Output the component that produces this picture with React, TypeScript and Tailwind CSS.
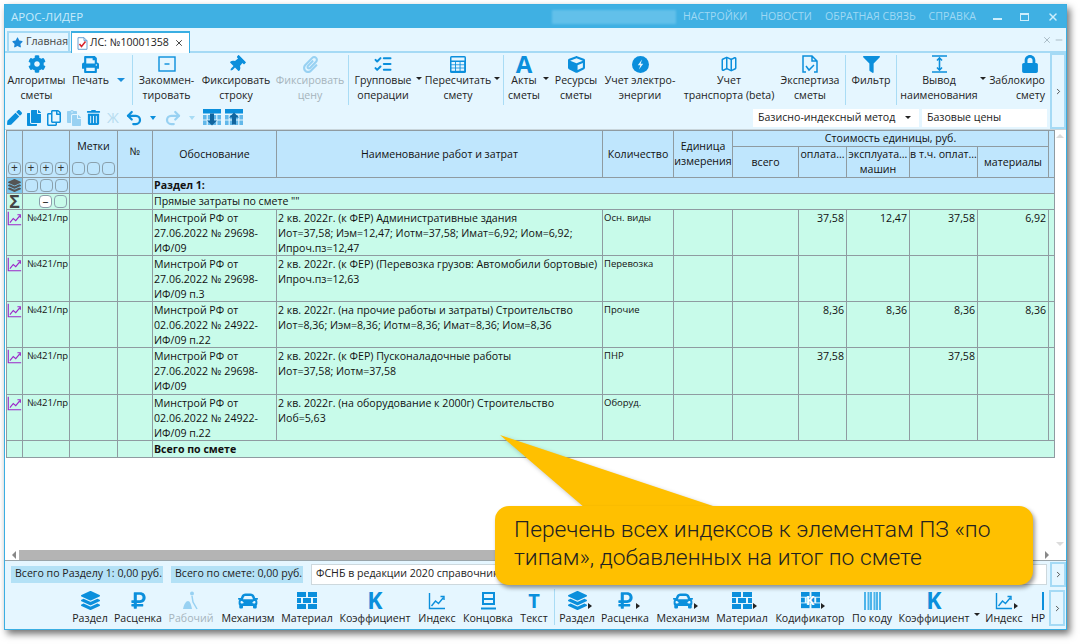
import type { ReactNode } from "react";
import {
  FaCog, FaPrint, FaThumbtack, FaPaperclip, FaFilter, FaLock, FaLayerGroup, FaRubleSign, FaCar,
  FaCube, FaTrashAlt, FaPen, FaCopy, FaRegCopy, FaPaste, FaStar,
} from "react-icons/fa";
import { Undo2, Redo2, X, Minus, ChevronRight, Map, ListChecks } from "lucide-react";

const blue = "#0b8fdc";

const Caret = ({ w = 4, big = false }: { w?: number; big?: boolean }) => (
  <span className="flex justify-center pt-[24px] shrink-0" style={{ width: w }}>
    {big
      ? <span className="shrink-0 mt-[1px] w-0 h-0 border-x-[4px] border-x-transparent border-t-[4px] border-t-[#1a8fdc]" />
      : <span className="shrink-0 w-0 h-0 border-x-[3px] border-x-transparent border-t-[3px] border-t-[#222]" />}
  </span>
);

const Sep = () => <span className="w-px h-[50px] bg-[#a9dcf5] shrink-0 mt-[2px]" />;

function Tool({ w, icon, a, b, dim, right }: { w: number; icon: ReactNode; a: string; b?: string; dim?: boolean; right?: boolean }) {
  return (
    <div className={`shrink-0 flex flex-col ${right ? "items-end pr-[1px]" : "items-center"} ${dim ? "text-[#a5b4bc]" : "text-[#222]"}`} style={{ width: w }}>
      <div className={`h-[22px] flex items-center justify-center text-[#0b8fdc] ${right ? "pr-[6px]" : ""}`} style={dim ? { opacity: 0.35 } : undefined}>{icon}</div>
      <div className={`text-[10.6px] leading-[15px] whitespace-nowrap -mt-[2px] ${right ? "text-right" : "text-center"}`}>{a}<br />{b || "\u00a0"}</div>
    </div>
  );
}

function Bricks({ size = 20 }: { size?: number }) {
  return (
    <svg width={size} height={size * 0.85} viewBox="0 0 20 17" fill={blue}>
      <rect x="0" y="0" width="9" height="5" /><rect x="11" y="0" width="9" height="5" />
      <rect x="0" y="6" width="4" height="5" /><rect x="6" y="6" width="8" height="5" /><rect x="16" y="6" width="4" height="5" />
      <rect x="0" y="12" width="9" height="5" /><rect x="11" y="12" width="9" height="5" />
    </svg>
  );
}

function ChartIcon({ size = 18, color = blue }: { size?: number; color?: string }) {
  return (
    <svg width={size} height={size} viewBox="0 0 18 18" fill="none" stroke={color} strokeWidth="1.4">
      <path d="M1.5 1v15.5H17" />
      <path d="M3.5 14l4-5 3 2.5 5-6" />
      <path d="M12.5 4.5h3.5v3.5" />
    </svg>
  );
}

const GridIcon = () => (
  <svg width="16" height="17" viewBox="0 0 16 17">
    <rect x="0" y="0" width="16" height="17" rx="1.5" fill={blue} />
    <rect x="1.5" y="1.5" width="13" height="3" fill="#e5f6ff" />
    {[6, 9.2, 12.4].map(y => [1.5, 6, 10.5].map(x => <rect key={`${x}-${y}`} x={x} y={y} width="3.6" height="2.4" fill="#e5f6ff" />))}
  </svg>
);

const BoltIcon = () => (
  <svg width="17" height="17" viewBox="0 0 17 17">
    <circle cx="8.5" cy="8.5" r="8.5" fill={blue} />
    <path d="M10 3.5L5.8 9.3h2.5L7 13.5l4.2-5.8H8.7z" fill="#e5f6ff" />
  </svg>
);

const ExpertIcon = () => (
  <svg width="16" height="18" viewBox="0 0 16 18" fill="none" stroke={blue} strokeWidth="1.5">
    <path d="M4 17H1V1h9l5 5v11h-3M10 1v5h5" />
    <path d="M4 11l3 4 5-5" />
  </svg>
);

const OutputIcon = () => (
  <svg width="17" height="18" viewBox="0 0 17 18" fill="none" stroke={blue} strokeWidth="1.6">
    <path d="M1 1h15M1 17h15M8.5 3v12" />
    <path d="M6 5.5l2.5-2.5 2.5 2.5M6 12.5l2.5 2.5 2.5-2.5" />
  </svg>
);

const CommentIcon = () => (
  <svg width="18" height="16" viewBox="0 0 18 16" fill="none" stroke={blue} strokeWidth="1.4">
    <rect x="1" y="1" width="16" height="14" />
    <path d="M6.5 8h5" />
  </svg>
);

const TabDoc = () => (
  <svg width="11" height="13" viewBox="0 0 11 13" fill="none">
    <path d="M1 .7h6l3 3v8.6H1zM7 .7v3h3" stroke="#6a9fd0" />
    <path d="M2.5 7l2 2.5 4-5" stroke="#d8202a" strokeWidth="1.5" />
  </svg>
);

function TableArrow({ up }: { up?: boolean }) {
  return (
    <svg width="18" height="17" viewBox="0 0 18 17" fill={blue}>
      <rect x="0" y="0" width="18" height="4.5" />
      {[6, 11.5].map(y => [0, 4.8, 9.6, 14.4].map(x => <rect key={`${x}-${y}`} x={x} y={y} width="3.6" height="4.5" fill="#62b8ea" />))}
      <path d={up ? "M9 3.5l5 5h-3v7H7v-7H4z" : "M9 16.5l5-5h-3v-7H7v7H4z"} fill="#10659f" />
    </svg>
  );
}

const Worker = () => (
  <svg width="17" height="19" viewBox="0 0 17 19" fill={blue}>
    <circle cx="9" cy="2.5" r="2" />
    <path d="M0 18c1-5 3-8 5-8s3 3 4 8z" />
    <path d="M9 5l1 6 4 7" fill="none" stroke={blue} strokeWidth="1.5" />
  </svg>
);

const Stripes = () => (
  <svg width="17" height="18" viewBox="0 0 17 18" fill="#4db4ea">
    {[0, 3.5, 6, 9.5, 12, 15].map(x => <rect key={x} x={x} y="0" width="2" height="18" />)}
  </svg>
);

const Codifier = () => (
  <span className="relative flex items-center justify-center">
    <Bricks size={19} />
    <span className="absolute text-[13px] font-bold leading-none text-white">K</span>
  </span>
);

const Play = () => <span className="absolute right-[-5px] bottom-[3px] w-0 h-0 border-y-[3px] border-y-transparent border-l-[4px] border-l-[#222]" />;

function BottomTool({ w, icon, label, dim, arrow }: { w: number; icon: ReactNode; label: string; dim?: boolean; arrow?: boolean }) {
  return (
    <div className="shrink-0 flex flex-col items-center" style={{ width: w }}>
      <div className="h-[23px] flex items-center justify-center relative" style={dim ? { opacity: 0.35 } : undefined}>
        {icon}
        {arrow && <Play />}
      </div>
      <div className={`text-[10.6px] leading-[15px] whitespace-nowrap -mt-[1px] ${dim ? "text-[#a5b4bc]" : "text-[#222]"}`}>{label}</div>
    </div>
  );
}

const Letter = ({ c, size }: { c: string; size: number }) => (
  <span className="font-bold leading-none text-[#0b8fdc]" style={{ fontSize: size }}>{c}</span>
);

const ConcIcon = () => (
  <svg width="17" height="18" viewBox="0 0 17 18" fill="none" stroke={blue} strokeWidth="2">
    <path d="M3 1h11v6H3zM3 7h11v5H3zM1 16.5h15" />
  </svg>
);

const HeadPlus = ({ minus, white }: { minus?: boolean; white?: boolean }) => (
  <span className={`w-[13px] h-[13px] rounded-[4px] border border-[#8aa0ac] flex items-center justify-center text-[#333] text-[12px] leading-none ${white ? "bg-white" : ""}`}>
    {minus ? "–" : "+"}
  </span>
);

const Blank = () => <span className="w-[13px] h-[13px] rounded-[4px] border border-[#8aa0ac]" />;

const cols = [16, 47, 48, 35, 124, 326, 71, 59, 66, 48, 63, 68, 71, 6];
const cell = "border-r border-b border-[#8f9ba1] align-top p-0";
const head = "border-r border-b border-[#8f9ba1] text-center font-normal p-0 align-middle";

const rows = [
  {
    just: ["Минстрой РФ от", "27.06.2022 № 29698-", "ИФ/09"],
    name: ["2 кв. 2022г. (к ФЕР) Административные здания", "Иот=37,58; Иэм=12,47; Иотм=37,58; Имат=6,92; Иом=6,92;", "Ипроч.пз=12,47"],
    kind: "Осн. виды", v: ["37,58", "12,47", "37,58", "6,92"], h: 46,
  },
  {
    just: ["Минстрой РФ от", "27.06.2022 № 29698-", "ИФ/09 п.3"],
    name: ["2 кв. 2022г. (к ФЕР) (Перевозка грузов: Автомобили бортовые)", "Ипроч.пз=12,63"],
    kind: "Перевозка", v: ["", "", "", ""], h: 46,
  },
  {
    just: ["Минстрой РФ от", "02.06.2022 № 24922-", "ИФ/09 п.22"],
    name: ["2 кв. 2022г. (на прочие работы и затраты) Строительство", "Иот=8,36; Иэм=8,36; Иотм=8,36; Имат=8,36; Иом=8,36"],
    kind: "Прочие", v: ["8,36", "8,36", "8,36", "8,36"], h: 46,
  },
  {
    just: ["Минстрой РФ от", "27.06.2022 № 29698-", "ИФ/09"],
    name: ["2 кв. 2022г. (к ФЕР) Пусконаладочные работы", "Иот=37,58; Иотм=37,58"],
    kind: "ПНР", v: ["37,58", "", "37,58", ""], h: 47,
  },
  {
    just: ["Минстрой РФ от", "02.06.2022 № 24922-", "ИФ/09 п.22"],
    name: ["2 кв. 2022г. (на оборудование к 2000г) Строительство", "Иоб=5,63"],
    kind: "Оборуд.", v: ["", "", "", ""], h: 46,
  },
];

function Smeta() {
  return (
    <table className="table-fixed border-collapse text-[10.6px] leading-[15px] text-[#111] w-[1048px] border-t border-l border-[#8f9ba1]">
      <colgroup>
        {cols.map((w, i) => <col key={i} style={{ width: w }} />)}
      </colgroup>
      <thead className="bg-[#bfe6fd]">
        <tr className="h-[16px]">
          <th rowSpan={2} className={head}><div className="h-[45px] flex items-end justify-center pb-[2px]"><HeadPlus /></div></th>
          <th rowSpan={2} className={head}><div className="h-[45px] flex items-end justify-center gap-[2px] pb-[2px]"><HeadPlus /><HeadPlus /><HeadPlus /></div></th>
          <th rowSpan={2} className={head}>
            <div className="h-[45px] flex flex-col items-center justify-between pt-[7px] pb-[2px]">
              <span>Метки</span>
              <span className="flex gap-[2px]"><Blank /><Blank /><Blank /></span>
            </div>
          </th>
          <th rowSpan={2} className={head}><span className="relative -top-[3px]">№</span></th>
          <th rowSpan={2} className={head}>Обоснование</th>
          <th rowSpan={2} className={head}>Наименование работ и затрат</th>
          <th rowSpan={2} className={head}>Количество</th>
          <th rowSpan={2} className={head}><span className="block">Единица<br />измерения</span></th>
          <th colSpan={5} className={head}>Стоимость единицы, руб.</th>
          <th rowSpan={2} className={head} />
        </tr>
        <tr className="h-[30px]">
          <th className={head}>всего</th>
          <th className={`${head} !align-top`}><span className="block whitespace-nowrap overflow-hidden">оплата...</span></th>
          <th className={`${head} !align-top`}><span className="block whitespace-nowrap overflow-hidden">эксплуата...<br />машин</span></th>
          <th className={`${head} !align-top`}><span className="block whitespace-nowrap overflow-hidden">в т.ч. оплат...</span></th>
          <th className={head}>материалы</th>
        </tr>
      </thead>
      <tbody>
        <tr className="h-[16px] bg-[#bfe6fd]">
          <td className={`${cell} bg-[#7ec7ec]`}><div className="flex justify-center pt-[1px]"><FaLayerGroup size={13} color="#555" /></div></td>
          <td className={cell}><div className="flex gap-[2px] justify-center pt-[1px]"><Blank /><Blank /><Blank /></div></td>
          <td className={cell} />
          <td className={cell} />
          <td colSpan={10} className={`${cell} font-bold pl-[1px]`}>Раздел 1:</td>
        </tr>
        <tr className="h-[16px] bg-[#c8fbea]">
          <td className={cell}><div className="text-center text-[18px] leading-[15px] font-bold text-[#444]">Σ</div></td>
          <td className={cell}><div className="flex gap-[2px] justify-end pr-[2px] pt-[1px]"><HeadPlus minus white /><Blank /></div></td>
          <td className={cell} />
          <td className={cell} />
          <td colSpan={10} className={`${cell} pl-[1px]`}>Прямые затраты по смете ""</td>
        </tr>
        {rows.map((r, i) => (
          <tr key={i} className="bg-[#c8fbea]" style={{ height: r.h }}>
            <td className={cell}><div className="flex justify-center pt-[1px]"><ChartIcon size={15} color="#9c27c9" /></div></td>
            <td className={`${cell} text-[9.5px] pl-[4px]`}>№421/пр</td>
            <td className={cell} />
            <td className={cell} />
            <td className={`${cell} pl-[1px]`}>{r.just.map(t => <div key={t} className="whitespace-nowrap relative top-[1px]">{t}</div>)}</td>
            <td className={`${cell} pl-[1px]`}>{r.name.map(t => <div key={t} className="whitespace-nowrap relative top-[1px]">{t}</div>)}</td>
            <td className={`${cell} text-[9.5px] pl-[1px]`}>{r.kind}</td>
            <td className={cell} />
            <td className={cell} />
            {r.v.map((v, j) => <td key={j} className={`${cell} text-right pr-[2px] pt-[1px]`}>{v}</td>)}
            <td className={cell} />
          </tr>
        ))}
        <tr className="h-[17px] bg-[#c8fbea]">
          <td className={cell} /><td className={cell} /><td className={cell} /><td className={cell} />
          <td colSpan={10} className={`${cell} font-bold pl-[1px] pt-[1px]`}>Всего по смете</td>
        </tr>
      </tbody>
    </table>
  );
}

export default function App() {
  return (
    <div className="w-[1081px] h-[644px] bg-white relative overflow-hidden pt-[4px] pl-[4px]" style={{ fontFamily: '"Open Sans", "Noto Sans", sans-serif' }}>
      <div className="w-[1063px] h-[626px] flex flex-col border border-[#3aaee2] bg-white shadow-[3px_4px_7px_rgba(0,0,0,0.55)]">
        {/* title bar */}
        <div className="h-[23px] shrink-0 bg-[#3fb0e3] flex items-center text-[10.6px] whitespace-nowrap pl-[6px]">
          <span className="text-[11.5px] text-[#c7ebfb] w-[541px] shrink-0">АРОС-ЛИДЕР</span>
          <span className="w-[124px] h-[14px] bg-[#62c0ea] blur-[1px] shrink-0" />
          <div className="ml-[7px] flex gap-[13px] text-[#9fd9f4]">
            <span>НАСТРОЙКИ</span><span>НОВОСТИ</span><span>ОБРАТНАЯ СВЯЗЬ</span><span>СПРАВКА</span>
          </div>
          <div className="ml-auto flex items-center gap-[18px] pr-[7px] text-[#cdeefc]">
            <span className="w-[9px] h-[2px] bg-[#cdeefc] mt-[4px]" />
            <span className="w-[9px] h-[8px] border border-t-2 border-[#cdeefc]" />
            <X size={12} strokeWidth={3} />
          </div>
        </div>
        {/* tabs */}
        <div className="h-[25px] shrink-0 bg-[#e5f6ff] flex items-end pl-[2px] border-b-2 border-[#a5daf5] relative">
          <div className="w-[63px] h-[20px] pl-[3px] flex items-center gap-[3px] border-2 border-b-0 border-[#a5daf5] text-[10.6px] text-[#444] whitespace-nowrap">
            <FaStar size={11} color="#1a86d6" /><span>Главная</span>
          </div>
          <div className="w-[119px] h-[22px] ml-[1px] pl-[5px] -mb-[2px] flex items-center gap-[2px] bg-white border-t-2 border-x border-[#3aaee2] text-[10.6px] text-[#222] whitespace-nowrap">
            <TabDoc /><span>ЛС: №10001358</span><X size={10} className="ml-[3px]" />
          </div>
          <div className="absolute right-[2px] top-[7px] flex items-center gap-[2px] text-[#9db0ba]">
            <X size={10} /><Minus size={10} />
          </div>
        </div>
        {/* ribbon */}
        <div className="h-[77px] shrink-0 bg-[#e5f6ff] flex border-b border-[#c9d5db]">
          <div className="flex-1 min-w-0 flex flex-col">
            <div className="h-[53px] flex overflow-hidden">
              <Tool w={63} a="Алгоритмы" b="сметы" icon={<FaCog size={18} />} />
              <Tool w={45} a="Печать" icon={<FaPrint size={17} />} />
              <Caret w={15} big />
              <span className="w-[4px] shrink-0" />
              <Sep />
              <Tool w={67} a="Закоммен-" b="тировать" icon={<CommentIcon />} />
              <Tool w={72} a="Фиксировать" b="строку" icon={<FaThumbtack size={17} style={{ transform: "rotate(45deg)" }} />} />
              <Tool w={76} a="Фиксировать" b="цену" dim icon={<FaPaperclip size={17} />} />
              <Sep />
              <Tool w={68} a="Групповые" b="операции" icon={<ListChecks size={20} strokeWidth={2.4} />} />
              <Caret w={4} />
              <Tool w={74} a="Пересчитать" b="смету" icon={<GridIcon />} />
              <Caret w={4} />
              <span className="w-[4px] shrink-0" />
              <Sep />
              <Tool w={40} a="Акты" b="сметы" icon={<Letter c="A" size={24} />} />
              <Caret w={4} />
              <Tool w={56} a="Ресурсы" b="сметы" icon={<FaCube size={17} />} />
              <Tool w={72} a="Учет электро-" b="энергии" icon={<BoltIcon />} />
              <Tool w={106} a="Учет" b="транспорта (beta)" icon={<Map size={18} />} />
              <Tool w={56} a="Экспертиза" b="сметы" icon={<ExpertIcon />} />
              <span className="w-[7px] shrink-0" />
              <Sep />
              <Tool w={50} a="Фильтр" icon={<FaFilter size={17} />} />
              <Sep />
              <Tool w={84} a="Вывод" b="наименования" icon={<OutputIcon />} />
              <Caret w={4} />
              <Tool w={61} a="Заблокиро" b="смету" right icon={<FaLock size={18} />} />
            </div>
            <div className="flex-1 flex items-center pl-[2px] text-[#0b8fdc] gap-[4px]">
              <FaPen size={15} /><FaCopy size={16} /><FaRegCopy size={16} /><FaPaste size={16} className="opacity-35" /><FaTrashAlt size={15} />
              <span className="text-[#b7dcef] text-[14px] leading-none px-[2px]">Ж</span>
              <Undo2 size={18} strokeWidth={3} />
              <span className="ml-[3px] w-0 h-0 border-x-[3px] border-x-transparent border-t-[4px] border-t-[#0b8fdc]" />
              <Redo2 size={18} strokeWidth={3} className="opacity-35 ml-[4px]" />
              <span className="ml-[3px] w-0 h-0 border-x-[3px] border-x-transparent border-t-[4px] border-t-[#a8dcf5]" />
              <span className="ml-[4px]"><TableArrow /></span>
              <TableArrow up />
              <div className="ml-auto flex gap-[3px] pr-[3px] text-[10.6px] text-[#222] whitespace-nowrap">
                <div className="w-[166px] h-[18px] bg-white flex items-center justify-between pl-[5px] pr-[8px]">
                  <span>Базисно-индексный метод</span>
                  <span className="w-0 h-0 border-x-[3px] border-x-transparent border-t-[3px] border-t-[#222]" />
                </div>
                <div className="w-[125px] h-[18px] bg-white flex items-center pl-[5px]">Базовые цены</div>
              </div>
            </div>
          </div>
          <div className="w-[16px] shrink-0 border-2 border-[#a5daf5] flex items-center justify-center"><ChevronRight size={9} color="#222" /></div>
        </div>
        {/* table */}
        <div className="flex-1 min-h-0 flex flex-col">
          <div className="flex-1 min-h-0 flex overflow-hidden">
            <div className="w-[1050px] shrink-0 pl-[1px]"><Smeta /></div>
            <div className="flex-1 flex flex-col items-center justify-between py-[4px] pr-[1px]">
              <span className="w-0 h-0 border-x-[4px] border-x-transparent border-b-[4px] border-b-[#dcdcdc]" />
              <span className="w-0 h-0 border-x-[4px] border-x-transparent border-t-[4px] border-t-[#dcdcdc]" />
            </div>
          </div>
          <div className="h-[10px] flex items-center shrink-0">
            <span className="w-0 h-0 ml-[7px] border-y-[4px] border-y-transparent border-r-[4px] border-r-[#888]" />
            <span className="ml-[3px] w-[790px] h-full bg-[#b4b4b4]" />
            <span className="w-0 h-0 ml-auto mr-[17px] border-y-[4px] border-y-transparent border-l-[4px] border-l-[#888]" />
          </div>
        </div>
        {/* status */}
        <div className="h-[27px] shrink-0 bg-[#e5f6ff] border-t border-[#9aa4a9] flex items-center pl-[6px] gap-[8px] text-[10.6px] text-[#222] whitespace-nowrap">
          <span className="w-[152px] h-[17px] pl-[4px] bg-[#b3e1f6] flex items-center">Всего по Разделу 1: 0,00 руб.</span>
          <span className="w-[132px] h-[17px] pl-[4px] bg-[#b3e1f6] flex items-center">Всего по смете: 0,00 руб.</span>
          <span className="flex-1 h-[21px] bg-white flex items-center pl-[4px] border border-[#cdd8dd]">ФСНБ в редакции 2020 справочник...</span>
          <span className="w-[16px] h-[25px] -ml-[5px] shrink-0 border-2 border-[#a5daf5] flex items-center justify-center"><ChevronRight size={9} color="#222" /></span>
        </div>
        {/* bottom toolbar */}
        <div className="h-[42px] shrink-0 bg-[#e5f6ff] flex items-start pl-[61px] pt-[2px] overflow-hidden">
          <BottomTool w={48} label="Раздел" icon={<FaLayerGroup size={19} color={blue} />} />
          <BottomTool w={48} label="Расценка" icon={<FaRubleSign size={19} color={blue} />} />
          <BottomTool w={58} label="Рабочий" dim icon={<Worker />} />
          <BottomTool w={56} label="Механизм" icon={<FaCar size={20} color={blue} />} />
          <BottomTool w={62} label="Материал" icon={<Bricks />} />
          <BottomTool w={74} label="Коэффициент" icon={<Letter c="K" size={23} />} />
          <BottomTool w={50} label="Индекс" icon={<ChartIcon />} />
          <BottomTool w={52} label="Концовка" icon={<ConcIcon />} />
          <BottomTool w={40} label="Текст" icon={<Letter c="T" size={20} />} />
          <span className="w-px h-[36px] bg-[#a9dcf5] shrink-0" />
          <BottomTool w={44} label="Раздел" arrow icon={<FaLayerGroup size={19} color={blue} />} />
          <BottomTool w={52} label="Расценка" arrow icon={<FaRubleSign size={19} color={blue} />} />
          <BottomTool w={64} label="Механизм" arrow icon={<FaCar size={20} color={blue} />} />
          <BottomTool w={54} label="Материал" arrow icon={<Bricks />} />
          <BottomTool w={82} label="Кодификатор" arrow icon={<Codifier />} />
          <BottomTool w={42} label="По коду" icon={<Stripes />} />
          <BottomTool w={82} label="Коэффициент" icon={<Letter c="K" size={23} />} />
          <Caret w={3} />
          <BottomTool w={52} label="Индекс" arrow icon={<ChartIcon />} />
          <BottomTool w={16} label="НР" icon={<span className="w-[2px] h-[18px] bg-[#0b8fdc] ml-[10px]" />} />
          <span className="w-[16px] h-[36px] shrink-0 border-2 border-[#a5daf5] flex items-center justify-center ml-[3px] mt-[1px]"><ChevronRight size={9} color="#222" /></span>
        </div>
      </div>
      {/* callout */}
      <svg className="absolute left-[497px] top-[433px] drop-shadow-[2px_2px_2px_rgba(0,0,0,0.25)]" width="226" height="76" viewBox="0 0 226 76">
        <path d="M3 2 L88 75 H222 Z" fill="#ffc000" />
      </svg>
      <div className="absolute left-[495px] top-[506px] w-[538px] h-[79px] rounded-[14px] bg-[#ffc000] shadow-[2px_3px_4px_rgba(0,0,0,0.4)] pl-[19px] pt-[10px] text-[22.8px] leading-[28px] font-light text-[#222] whitespace-nowrap" style={{ fontFamily: "Roboto, sans-serif" }}>
        Перечень всех индексов к элементам ПЗ «по<br />типам», добавленных на итог по смете
      </div>
    </div>
  );
}
